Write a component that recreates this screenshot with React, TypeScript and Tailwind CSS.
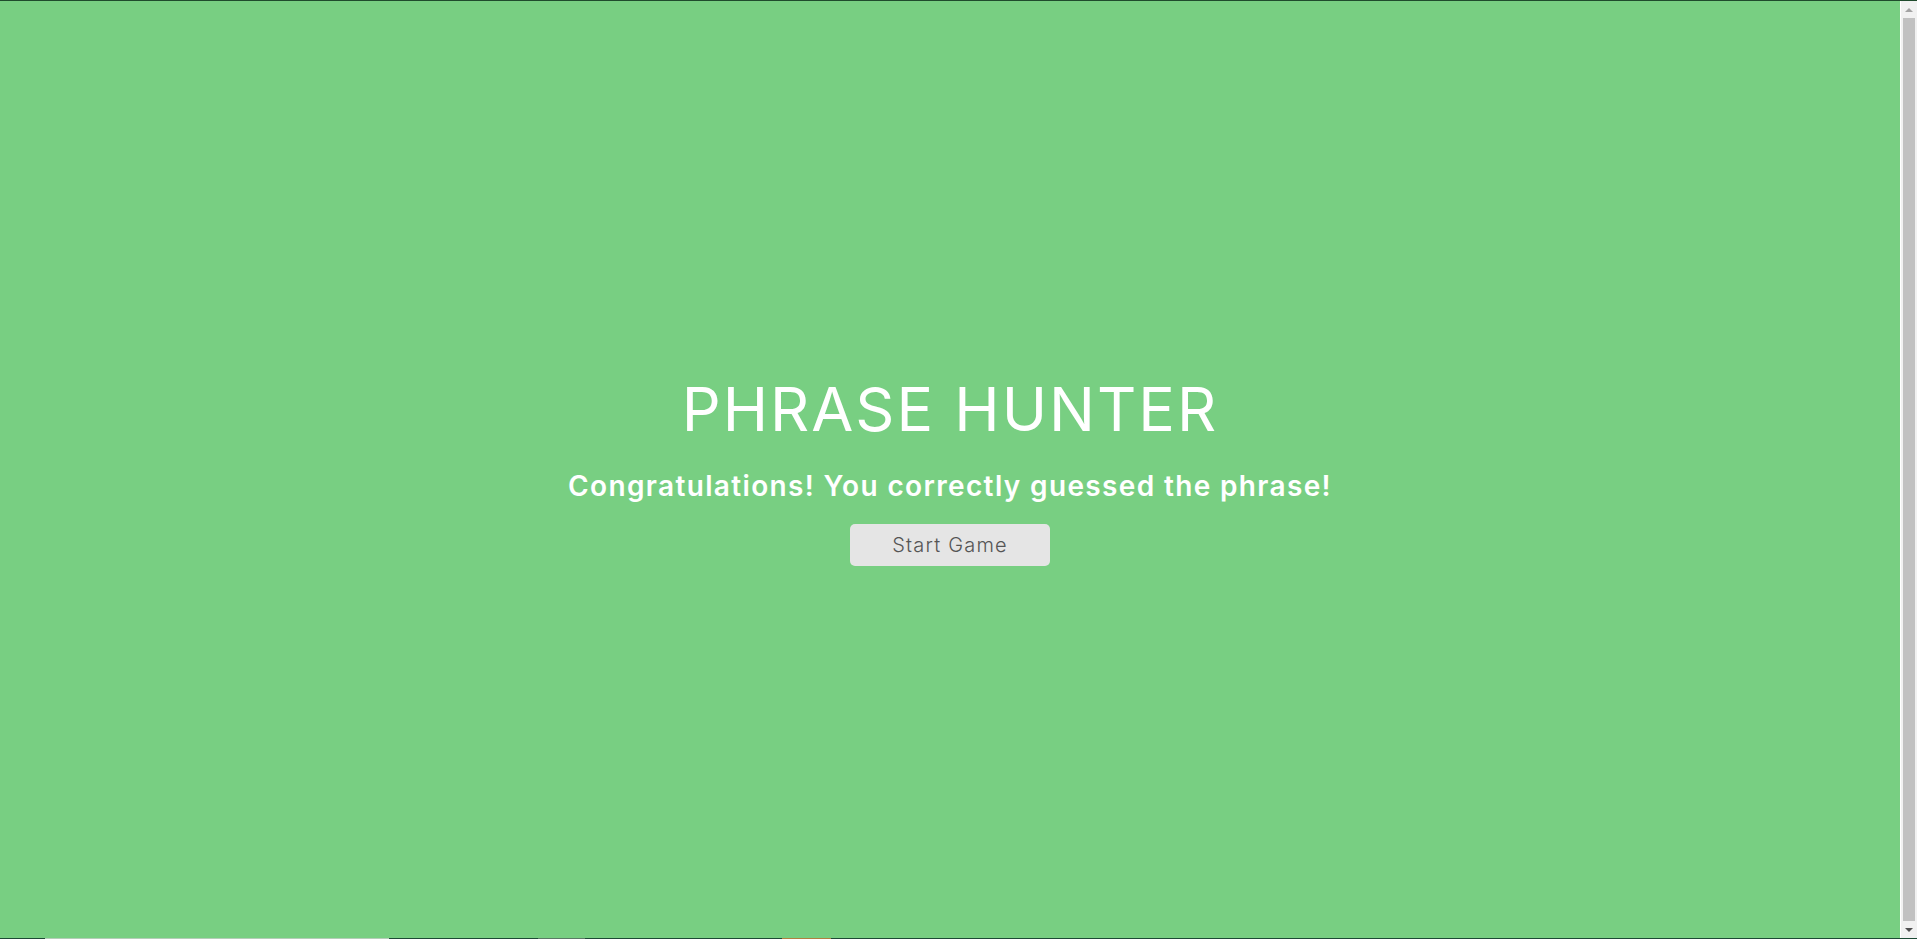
import React from "react";

const App = () => {
  return (
    <div className="flex h-[939px] w-full flex-col overflow-hidden bg-[#78cf82] font-['Inter',sans-serif]">
      {/* top window edge */}
      <div className="h-px w-full bg-[#1f4b2c]" />

      <div className="flex min-h-0 flex-1">
        {/* Overlay */}
        <div className="flex flex-1 flex-col items-center justify-center pt-[5px] text-center">
          <h1 className="text-[61px] font-normal leading-none tracking-[2px] text-white">
            PHRASE HUNTER
          </h1>
          <h2 className="mt-8 text-[28px] font-semibold leading-none tracking-[1.35px] text-white">
            Congratulations! You correctly guessed the phrase!
          </h2>
          <button className="mt-6 h-[42px] w-[200px] rounded-[5px] bg-[#e5e5e5] text-[20px] font-light tracking-[1.2px] text-[#555]">
            Start Game
          </button>
        </div>

        {/* Scrollbar */}
        <div className="flex w-[17px] flex-col border-l border-white bg-[#f1f1f1]">
          <div className="flex h-[17px] items-center justify-center">
            <div className="h-0 w-0 border-x-[4px] border-b-[4px] border-x-transparent border-b-[#a3a3a3]" />
          </div>
          <div className="mx-[2px] flex-1 bg-[#c1c1c1]" />
          <div className="flex h-[17px] items-center justify-center">
            <div className="h-0 w-0 border-x-[4px] border-t-[4px] border-x-transparent border-t-[#505050]" />
          </div>
        </div>
      </div>

      {/* bottom window edge */}
      <div className="flex h-px w-full bg-[#1d4a35]">
        <div className="w-[45px]" />
        <div className="w-[344px] bg-[#b5cdb9]" />
        <div className="w-[149px]" />
        <div className="w-[47px] bg-[#5b7a66]" />
        <div className="w-[197px]" />
        <div className="w-[49px] bg-[#b08040]" />
      </div>
    </div>
  );
};

export default App;
